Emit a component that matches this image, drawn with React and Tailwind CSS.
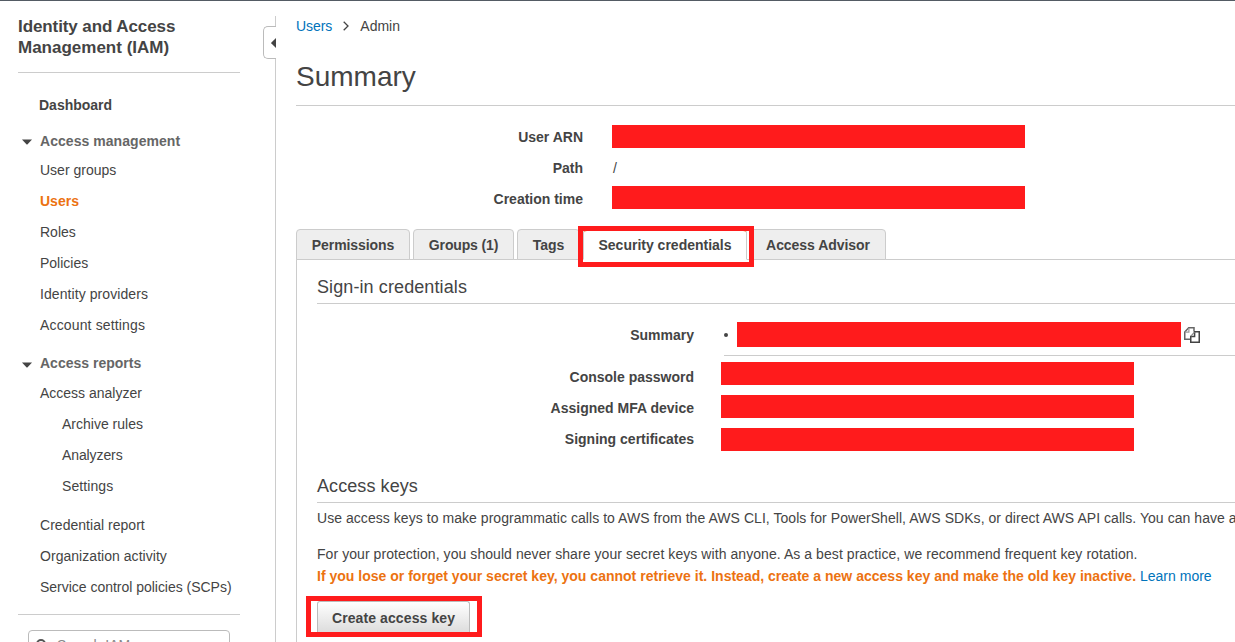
import React from "react";

function NavItem({ children, className = "" }) {
  return <a className={`flex h-[31px] shrink-0 items-center pl-10 whitespace-nowrap ${className}`}>{children}</a>;
}

function NavHeading({ children, className = "" }) {
  return (
    <div className={`flex shrink-0 items-center pl-[22px] font-bold text-[#666] whitespace-nowrap ${className}`}>
      <svg width="10" height="6" viewBox="0 0 10 6" className="mt-[2px] mr-2 shrink-0">
        <path d="M0 0.5H10L5.6 5.2Q5 5.8 4.4 5.2Z" fill="#444" />
      </svg>
      {children}
    </div>
  );
}

function Sidebar() {
  return (
    <nav className="flex w-[263px] shrink-0 flex-col">
      <h2 className="mt-[15px] ml-[18px] h-[42px] shrink-0 text-[17px] leading-[21px] font-bold whitespace-nowrap">
        <span className="tracking-[-0.09px]">Identity and Access</span>
        <br />
        Management (IAM)
      </h2>
      <div className="mt-[14px] ml-[18px] h-px w-[222px] shrink-0 bg-[#ccc]" />
      <a className="mt-[17px] flex h-[31px] shrink-0 items-center pl-[39px] font-bold">Dashboard</a>
      <NavHeading className="mt-[5px] h-[30px] tracking-[0.05px]">Access management</NavHeading>
      <NavItem className="-mt-px">User groups</NavItem>
      <NavItem className="font-bold text-[#ec7211]">Users</NavItem>
      <NavItem>Roles</NavItem>
      <NavItem>Policies</NavItem>
      <NavItem className="tracking-[0.08px]">Identity providers</NavItem>
      <NavItem className="tracking-[0.15px]">Account settings</NavItem>
      <NavHeading className="mt-[7px] h-[31px]">Access reports</NavHeading>
      <NavItem className="-mt-px">Access analyzer</NavItem>
      <NavItem className="ml-[22px]">Archive rules</NavItem>
      <NavItem className="ml-[22px] tracking-[-0.1px]">Analyzers</NavItem>
      <NavItem className="ml-[22px] tracking-[0.08px]">Settings</NavItem>
      <NavItem className="mt-2 tracking-[0.03px]">Credential report</NavItem>
      <NavItem className="tracking-[0.04px]">Organization activity</NavItem>
      <NavItem className="tracking-[-0.02px]">Service control policies (SCPs)</NavItem>
      <div className="mt-[11px] ml-[18px] h-px w-[222px] shrink-0 bg-[#ccc]" />
      <div className="mt-[15px] ml-7 flex h-[30px] w-[202px] shrink-0 items-center rounded-[4px] border border-[#bbb] pl-[7px] text-[#888]">
        <svg width="13" height="13" viewBox="0 0 13 13" fill="none" stroke="#555" strokeWidth="2">
          <circle cx="5" cy="5" r="4" />
          <path d="M8 8L12 12" />
        </svg>
        <span className="ml-[8px]">Search IAM</span>
      </div>
    </nav>
  );
}

function Rail() {
  return (
    <div className="mt-[15px] flex w-[13px] shrink-0 flex-col">
      <div className="h-[10px] border-r border-[#ccc]" />
      <button className="flex h-[33px] items-center justify-end rounded-l-[5px] border border-r-0 border-[#bbb]">
        <svg width="5" height="10" viewBox="0 0 5 10">
          <path d="M5 0V10L0.4 5.5Q0 5 0.4 4.5Z" fill="#444" />
        </svg>
      </button>
      <div className="flex-1 border-r border-[#ccc]" />
    </div>
  );
}

function Field({ label, children }) {
  return (
    <div className="flex h-[31px]">
      <div className="w-[287px] text-right leading-[31px] font-bold">{label}</div>
      <div className="ml-[29px]">{children}</div>
    </div>
  );
}

function Tab({ children, className = "" }) {
  return (
    <div className={`flex h-[31px] items-center justify-center rounded-t-[4px] border border-[#ccc] bg-[#eee] pt-[2px] font-bold whitespace-nowrap ${className}`}>
      {children}
    </div>
  );
}

function CopyIcon() {
  return (
    <svg width="16" height="16" viewBox="0 0 16 16" fill="none" className="mt-[5px] ml-[3px]">
      <path d="M6 12.3H0.75V5L4.7 0.75H10V4.5" stroke="#666" strokeWidth="1.5" />
      <path d="M4.9 1V5.2H1" stroke="#999" strokeWidth="1.2" />
      <path d="M6.75 15.25V9.6H10.6V4.75H15.25V15.25Z" fill="#fff" stroke="#444" strokeWidth="1.5" />
      <path d="M6.9 9.2L10.4 5.2" stroke="#888" strokeWidth="1.2" />
    </svg>
  );
}

function Main() {
  return (
    <main className="min-w-0 flex-1 overflow-hidden pl-5">
      <div className="mt-[10px] flex h-[31px] items-center">
        <a className="tracking-[-0.05px] text-[#0073bb]">Users</a>
        <svg width="6" height="10" viewBox="0 0 6 10" fill="none" stroke="#444" strokeWidth="1.3" className="-mt-px ml-[11px]">
          <path d="M0.7 0.8L5 5L0.7 9.2" />
        </svg>
        <span className="ml-[11px]">Admin</span>
      </div>
      <h1 className="mt-[15px] h-[40px] text-[28px] leading-[40px]">Summary</h1>
      <div className="mt-[8px] h-px bg-[#ccc]" />
      <div className="mt-4">
        <Field label="User ARN">
          <div className="mt-[3px] h-[23px] w-[413px] bg-[#ff1b1c]" />
        </Field>
        <Field label="Path">
          <span className="ml-px leading-[30px]">/</span>
        </Field>
        <Field label="Creation time">
          <div className="mt-[2px] h-[23px] w-[413px] bg-[#ff1b1c]" />
        </Field>
      </div>
      <div className="relative mt-[14px] flex h-[31px] gap-[3px]">
        <Tab className="w-[114px] tracking-[-0.08px]">Permissions</Tab>
        <Tab className="w-[101px] tracking-[-0.15px]">Groups (1)</Tab>
        <Tab className="w-[63px]">Tags</Tab>
        <Tab className="z-10 w-[164px] border-t-2 border-t-[#ec7211] border-b-white bg-white pt-px">Security credentials</Tab>
        <Tab className="w-[136px] tracking-[-0.05px]">Access Advisor</Tab>
        <div className="absolute -top-[3px] left-[282px] z-20 h-[41px] w-[176px] border-[5px] border-[#ff1b1c]" />
      </div>
      <section className="-mt-px h-[400px] border-t border-l border-[#ccc] pl-5">
        <h2 className="mt-[12px] h-[32px] border-b border-[#ccc] text-[18px] leading-[30px] tracking-[0.1px]">Sign-in credentials</h2>
        <div className="mt-[18px] flex h-[34px]">
          <div className="w-[377px] text-right leading-[26px] font-bold">Summary</div>
          <div className="ml-[30px] flex flex-1 border-b border-[#ccc]">
            <div className="mt-[11px] size-1 rounded-full bg-[#444]" />
            <div className="ml-[9px] h-[25px] w-[444px] bg-[#ff1b1c]" />
            <CopyIcon />
          </div>
        </div>
        <div className="mt-[6px] flex">
          <div className="w-[377px] text-right leading-[31px] font-bold">
            <div>Console password</div>
            <div>Assigned MFA device</div>
            <div>Signing certificates</div>
          </div>
          <div className="ml-[27px] flex flex-col gap-[10px]">
            <div className="h-[23px] w-[413px] bg-[#ff1b1c]" />
            <div className="h-[23px] w-[413px] bg-[#ff1b1c]" />
            <div className="h-[23px] w-[413px] bg-[#ff1b1c]" />
          </div>
        </div>
        <h2 className="mt-[18px] h-[30px] border-b border-[#ccc] text-[18px] leading-[26px] tracking-[0.08px]">Access keys</h2>
        <p className="mt-[4px] leading-[22px] tracking-[0.05px] whitespace-nowrap">
          Use access keys to make programmatic calls to AWS from the AWS CLI, Tools for PowerShell, AWS SDKs, or direct AWS API calls. You can have a maximum of two access keys
        </p>
        <p className="mt-[14px] leading-[22px] tracking-[0.063px] whitespace-nowrap">
          For your protection, you should never share your secret keys with anyone. As a best practice, we recommend frequent key rotation.
        </p>
        <p className="leading-[22px] tracking-[0.012px] whitespace-nowrap">
          <b className="text-[#ec7211]">If you lose or forget your secret key, you cannot retrieve it. Instead, create a new access key and make the old key inactive.</b>{" "}
          <a className="text-[#0073bb]">Learn more</a>
        </p>
        <div className="mt-[9px] -ml-[11px] h-[41px] w-[176px] border-[5px] border-[#ff1b1c] pl-[6px]">
          <button className="h-[31px] w-[153px] rounded-t-[3px] border border-b-0 border-[#bbb] bg-gradient-to-b from-white to-[#ddd] pt-[3px] font-bold tracking-[0.1px]">Create access key</button>
        </div>
      </section>
    </main>
  );
}

export default function App() {
  return (
    <div className="flex h-[642px] w-[1235px] overflow-hidden border-t border-[#545b64] bg-white font-['Liberation_Sans',Arial,sans-serif] text-[14px] text-[#444]">
      <Sidebar />
      <Rail />
      <Main />
    </div>
  );
}
